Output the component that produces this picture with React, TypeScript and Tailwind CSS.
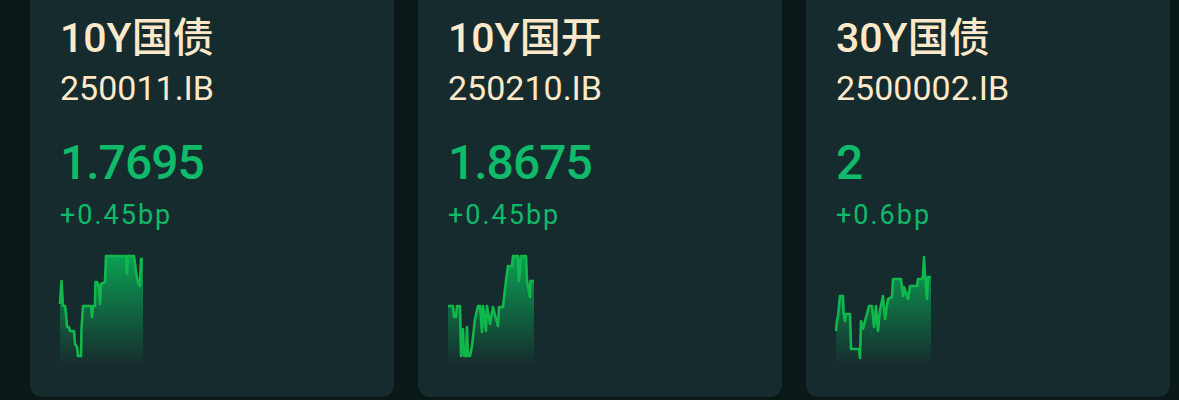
import React from 'react';

interface Quote {
  name: string;
  code: string;
  price: string;
  change: string;
  width: number;
  points: [number, number][];
}

const quotes: Quote[] = [
  {
    name: '10Y国债',
    code: '250011.IB',
    price: '1.7695',
    change: '+0.45bp',
    width: 83,
    points: [
      [0, 50], [1.5, 27], [3, 52], [5, 52], [6, 60], [7, 73], [9, 73], [10, 77], [14, 77], [15, 90], [17, 93],
      [18, 102], [21, 102], [21.5, 75], [23, 52], [31, 52], [32, 63], [33, 52], [35, 52], [35.5, 28], [37, 28],
      [39, 33], [40, 50], [41, 30], [45, 28], [46, 2], [66, 2], [67, 20], [68, 2], [74, 2], [76, 18], [78, 28],
      [80, 32], [81, 5], [83, 5],
    ],
  },
  {
    name: '10Y国开',
    code: '250210.IB',
    price: '1.8675',
    change: '+0.45bp',
    width: 86,
    points: [
      [0, 52], [5, 52], [6, 63], [8, 63], [9, 52], [12, 52], [12.5, 75], [13, 102], [15, 75], [16, 102], [18, 102],
      [19, 73], [20, 102], [22, 102], [24, 92], [27, 65], [30, 52], [32, 52], [34, 78], [35, 52], [38, 77], [39, 52],
      [42, 70], [45, 53], [48, 65], [50, 72], [51, 53], [55, 53], [58, 27], [60, 12], [64, 12], [65, 2], [70, 2],
      [71, 27], [73, 2], [78, 2], [79, 27], [82, 43], [82.5, 27], [86, 27],
    ],
  },
  {
    name: '30Y国债',
    code: '2500002.IB',
    price: '2',
    change: '+0.6bp',
    width: 95,
    points: [
      [0, 77], [1, 67], [2, 62], [4, 42], [7, 42], [7.5, 58], [9, 67], [10, 60], [14, 60], [15, 95], [23, 95],
      [24, 104], [25, 67], [27, 75], [29, 67], [31, 60], [33, 52], [36, 52], [38, 73], [40, 52], [42, 77], [44, 56],
      [47, 42], [49, 65], [52, 45], [56, 43], [57, 25], [65, 25], [67, 42], [68, 33], [72, 45], [74, 32], [81, 32],
      [82, 25], [86, 25], [87, 22], [88, 3], [89, 20], [91, 45], [92, 23], [95, 23],
    ],
  },
];

const Sparkline: React.FC<{ points: [number, number][]; width: number; id: string }> = ({ points, width, id }) => {
  const line = points.map(([x, y]) => `${x},${y}`).join(' ');
  const area = `0,112 ${line} ${width},112`;
  return (
    <svg width={width} height={112} viewBox={`0 0 ${width} 112`} className="block overflow-visible">
      <defs>
        <linearGradient id={id} x1="0" y1="0" x2="0" y2="1">
          <stop offset="0%" stopColor="#0aa656" stopOpacity="0.95" />
          <stop offset="100%" stopColor="#0aa656" stopOpacity="0" />
        </linearGradient>
      </defs>
      <polygon points={area} fill={`url(#${id})`} />
      <polyline points={line} fill="none" stroke="#10b84c" strokeWidth="2.6" strokeLinejoin="round" />
    </svg>
  );
};

const QuoteCard: React.FC<{ quote: Quote; index: number }> = ({ quote, index }) => (
  <div className="w-[364px] h-[397px] shrink-0 rounded-b-xl bg-[#162b2d] px-[30px] pt-[14px]">
    <div className="text-[41px] leading-[48px] font-medium text-[#fde9c9]">{quote.name}</div>
    <div className="mt-[6px] text-[34px] leading-[40px] text-[#fde9c9]">{quote.code}</div>
    <div className="mt-[27px] text-[48px] leading-[56px] font-medium tracking-[-1px] text-[#0fba6b]">{quote.price}</div>
    <div className="mt-2 text-[27px] leading-[32px] tracking-[2px] text-[#0fba6b]">{quote.change}</div>
    <div className="mt-[23px]">
      <Sparkline points={quote.points} width={quote.width} id={`spark-${index}`} />
    </div>
  </div>
);

export default function App() {
  return (
    <div
      className="h-[400px] w-[1179px] overflow-hidden bg-[#0a1817] flex gap-6 pl-[30px]"
      style={{ fontFamily: 'Roboto, "Noto Sans CJK SC", sans-serif' }}
    >
      {quotes.map((q, i) => (
        <QuoteCard key={q.code} quote={q} index={i} />
      ))}
    </div>
  );
}
